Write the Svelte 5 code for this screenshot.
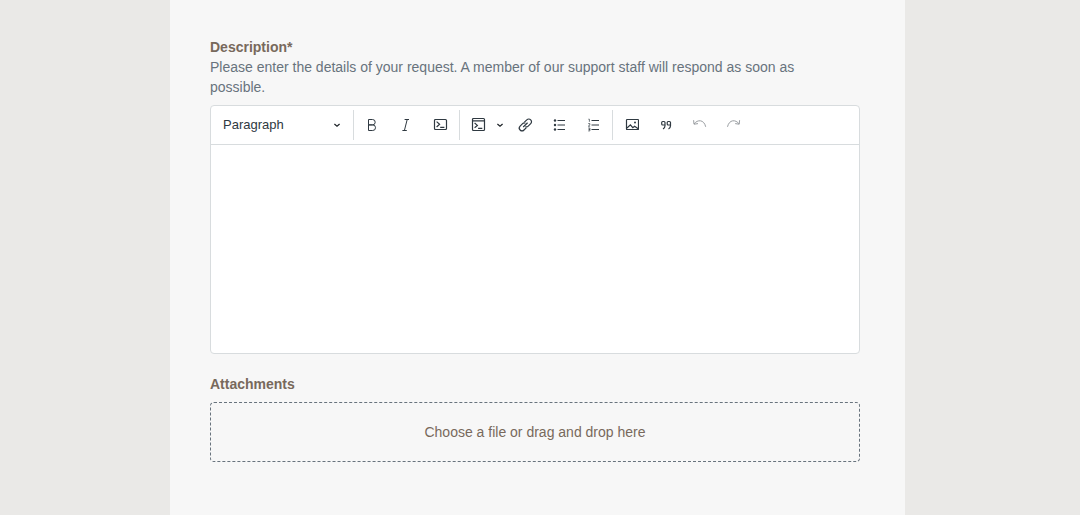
<script>
    let style = $state('paragraph');
    let description = $state('');
    let files = $state(null);

    const styles = [
        { value: 'paragraph', label: 'Paragraph' },
        { value: 'heading1', label: 'Heading 1' },
        { value: 'heading2', label: 'Heading 2' },
        { value: 'heading3', label: 'Heading 3' }
    ];
</script>

<div class="page">
    <form class="panel">
        <div class="field">
            <label class="title" for="description">Description*</label>
            <p class="hint" id="description-hint">Please enter the details of your request. A member of our support staff will respond as soon as possible.</p>

            <div class="editor">
                <div class="toolbar" role="toolbar" aria-label="Editor toolbar">
                    <div class="style-picker">
                        <select aria-label="Heading" bind:value={style}>
                            {#each styles as item}
                                <option value={item.value}>{item.label}</option>
                            {/each}
                        </select>
                        <svg class="chevron" viewBox="0 0 10 10"><path d="M2.4 4 5 6.3 7.6 4" /></svg>
                    </div>

                    <span class="separator"></span>

                    <button type="button" class="tool" title="Bold">
                        <svg viewBox="0 0 16 16"><path d="M4.5 2.5h4a2.7 2.7 0 0 1 0 5.4h-4zM4.5 7.9h4.2a2.8 2.8 0 0 1 0 5.6H4.5z" /></svg>
                    </button>
                    <button type="button" class="tool" title="Italic">
                        <svg viewBox="0 0 16 16"><path d="M6.6 2.5h4.4M4.4 13.5h4.4M9.2 2.5 6.4 13.5" /></svg>
                    </button>
                    <button type="button" class="tool" title="Code">
                        <svg class="medium" viewBox="0 0 16 16">
                            <rect x="2.5" y="2.5" width="12" height="10" rx="1" />
                            <path d="M4.6 4.6 7.6 7.3 4.6 10M8.2 10.3h4.2" />
                        </svg>
                    </button>

                    <span class="separator"></span>

                    <button type="button" class="tool" title="Insert code block">
                        <svg class="medium" viewBox="0 0 16 16">
                            <rect x="2.5" y="1.5" width="12" height="12" rx="1" />
                            <path d="M2.5 3.8h12M4.6 6 7.4 8.4 4.6 10.8M8.1 11.3h4.2" />
                        </svg>
                    </button>
                    <button type="button" class="tool-arrow" title="Code block language">
                        <svg class="chevron" viewBox="0 0 10 10"><path d="M2.4 4 5 6.3 7.6 4" /></svg>
                    </button>
                    <button type="button" class="tool" title="Link">
                        <svg class="medium" viewBox="0 0 16 16">
                            <path d="M7.4 5.2 9.8 2.8a2.7 2.7 0 0 1 3.9 3.9l-2.5 2.5a2.4 2.4 0 0 1-2.8.4" />
                            <path d="M9.4 10.6 7 13a2.7 2.7 0 0 1-3.9-3.9l2.5-2.5a2.4 2.4 0 0 1 2.8-.4" />
                            <path d="M6.2 10 10.6 5.8" />
                        </svg>
                    </button>
                    <button type="button" class="tool" title="Bulleted list">
                        <svg viewBox="0 0 16 16">
                            <path d="M6.5 3.5h7.5M6.5 8h7.5M6.5 12.5h7.5" />
                            <g class="solid">
                                <circle cx="4" cy="3.5" r="1.2" />
                                <circle cx="4" cy="8" r="1.2" />
                                <circle cx="4" cy="12.5" r="1.2" />
                            </g>
                        </svg>
                    </button>
                    <button type="button" class="tool" title="Numbered list">
                        <svg viewBox="0 0 16 16">
                            <path d="M6.5 3.5h7.5M6.5 8h7.5M6.5 12.5h7.5" />
                            <path class="thin" d="M3.4 2.2h1v2.6M3.2 6.6h1.7v1.2L3.3 9.2h1.8M3.2 11h1.7v1.4H3.7h1.2v1.5H3.2" />
                        </svg>
                    </button>

                    <span class="separator"></span>

                    <button type="button" class="tool" title="Insert image">
                        <svg class="medium" viewBox="0 0 16 16">
                            <rect x="3.5" y="2.5" width="12" height="10" rx=".6" />
                            <path d="M4 11 7.4 7.8l2.4 2.8 1.8-1.4 3.6 2.6" />
                            <circle class="solid" cx="12" cy="5.6" r="1" />
                        </svg>
                    </button>
                    <button type="button" class="tool" title="Block quote">
                        <svg class="medium" viewBox="0 0 16 16">
                            <path d="M8 8H5.7a1 1 0 0 1-1-1V5.5a1 1 0 0 1 1-1H7a1 1 0 0 1 1 1v3.3Q8 11 6 12" />
                            <path d="M13.5 8h-2.3a1 1 0 0 1-1-1V5.5a1 1 0 0 1 1-1h1.3a1 1 0 0 1 1 1v3.3q0 2.2-2 3.2" />
                        </svg>
                    </button>
                    <button type="button" class="tool" title="Undo" disabled>
                        <svg viewBox="0 0 16 16"><path d="M2.6 3.2 3 7.2l4-.6M3 7C6.5 2.2 13 2.4 14.7 9.8" /></svg>
                    </button>
                    <button type="button" class="tool" title="Redo" disabled>
                        <svg viewBox="0 0 16 16"><path d="m14.6 3.2-.4 4-4-.6M14.2 7C10.7 2.2 4.2 2.4 2.5 9.8" /></svg>
                    </button>
                </div>
                <textarea id="description" aria-describedby="description-hint" bind:value={description}></textarea>
            </div>
        </div>

        <div class="field">
            <label class="title" for="attachments">Attachments</label>
            <label class="dropzone">
                <input id="attachments" type="file" multiple bind:files />
                <span>Choose a file or drag and drop here</span>
            </label>
        </div>
    </form>
</div>

<style>
    :global(body) {
        background: #eae9e7;
    }

    .page {
        box-sizing: border-box;
        min-height: 100vh;
        display: flex;
        justify-content: center;
        padding-right: 5px;
        font-family: "Liberation Sans", Arial, Helvetica, sans-serif;
        font-size: 14px;
        line-height: 20px;
    }

    .panel {
        box-sizing: border-box;
        width: 100%;
        max-width: 735px;
        padding: 37px 45px 37px 40px;
        background: #f7f7f7;
    }

    .field {
        margin-bottom: 20px;
    }

    .title {
        display: block;
        font-weight: bold;
        color: #78695c;
    }

    .hint {
        max-width: 620px;
        margin: 0;
        color: #68737d;
    }

    .editor {
        margin-top: 8px;
        border: 1px solid #d8dcde;
        border-radius: 4px;
        background: #fff;
        overflow: hidden;
    }

    .toolbar {
        display: flex;
        align-items: center;
        height: 38px;
        border-bottom: 1px solid #d8dcde;
    }

    .style-picker {
        position: relative;
        width: 140px;
    }

    .style-picker select {
        appearance: none;
        width: 100%;
        height: 34px;
        padding: 0 24px 0 12px;
        border: 0;
        background: none;
        font: inherit;
        font-size: 13px;
        color: #2f3941;
    }

    .style-picker .chevron {
        position: absolute;
        right: 9px;
        top: 12px;
        pointer-events: none;
    }

    .separator {
        width: 1px;
        height: 30px;
        margin: 0 1px 0 2px;
        background: #d8dcde;
    }

    .tool,
    .tool-arrow {
        display: flex;
        align-items: center;
        height: 34px;
        padding: 0;
        border: 0;
        background: none;
        color: #2f3941;
    }

    .tool {
        width: 34px;
        justify-content: center;
    }

    .tool-arrow {
        width: 13px;
    }

    .tool:disabled {
        color: #999da1;
    }

    svg {
        width: 16px;
        height: 16px;
        fill: none;
        stroke: currentColor;
        stroke-width: 1;
    }

    .chevron {
        width: 10px;
        height: 10px;
        stroke: #1c2126;
        stroke-width: 1.2;
    }

    .medium {
        stroke-width: 1.2;
    }

    .thin {
        stroke-width: .7;
    }

    .solid {
        fill: currentColor;
        stroke: none;
    }

    textarea {
        display: block;
        box-sizing: border-box;
        width: 100%;
        height: 208px;
        padding: 12px;
        border: 0;
        outline: 0;
        resize: none;
        background: none;
        font: inherit;
        color: #2f3941;
    }

    .dropzone {
        position: relative;
        display: block;
        margin-top: 8px;
        padding: 19px;
        border: 1px dashed #68737d;
        border-radius: 4px;
        text-align: center;
        color: #78695c;
        cursor: pointer;
    }

    .dropzone input {
        position: absolute;
        inset: 0;
        width: 100%;
        opacity: 0;
    }
</style>
